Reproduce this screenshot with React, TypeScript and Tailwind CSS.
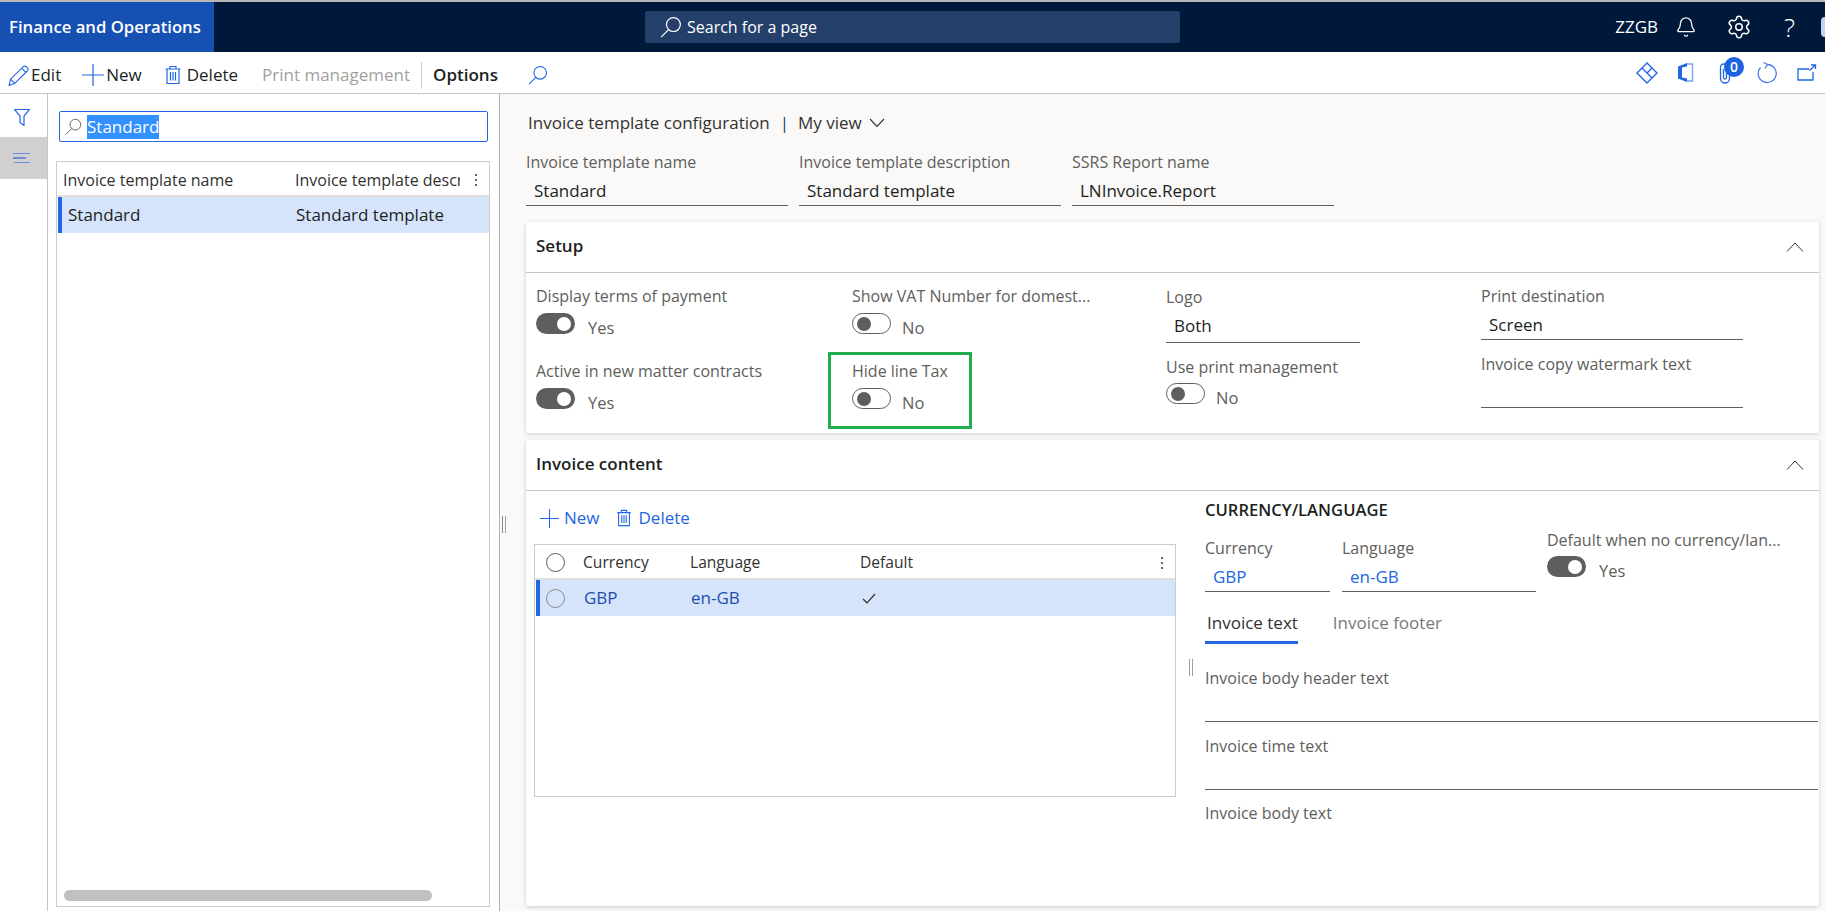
import React from "react";
import { Bell, Settings } from "lucide-react";

const BLUE = "#2266e3";

const Icon = ({ size = 20, color = BLUE, children }: { size?: number; color?: string; children: React.ReactNode }) => (
  <svg width={size} height={size} viewBox="0 0 20 20" fill="none" stroke={color} strokeWidth={1.1} className="shrink-0">
    {children}
  </svg>
);

const PlusIcon = ({ size = 22 }: { size?: number }) => (
  <Icon size={size}>
    <path d="M0 10H20M10 0V20" />
  </Icon>
);

const TrashIcon = ({ size = 20 }: { size?: number }) => (
  <Icon size={size}>
    <path d="M2.5 4H17.5M7 4V1.5H13V4M4 4V18.5H16V4M7.5 7V15.5M10 7V15.5M12.5 7V15.5" strokeWidth={1.2} />
  </Icon>
);

const SearchIcon = ({ size = 20, color = BLUE }: { size?: number; color?: string }) => (
  <Icon size={size} color={color}>
    <circle cx="12.2" cy="7.8" r="6.3" />
    <path d="M7.8 12.4L1 19.2" />
  </Icon>
);

const Kebab = () => (
  <svg width="4" height="14" viewBox="0 0 4 14" fill="#323130" className="shrink-0">
    <circle cx="2" cy="2" r="1" />
    <circle cx="2" cy="7" r="1" />
    <circle cx="2" cy="12" r="1" />
  </svg>
);

const Toggle = ({ on, label }: { on: boolean; label: string }) => (
  <div className="flex items-start">
    {on ? (
      <div className="flex h-[21px] w-[39px] items-center justify-end rounded-full bg-[#605e5c] pr-[4px]">
        <div className="h-[14px] w-[14px] rounded-full bg-white" />
      </div>
    ) : (
      <div className="flex h-[21px] w-[39px] items-center rounded-full border border-[#605e5c] bg-white pl-[4px]">
        <div className="h-[14px] w-[14px] rounded-full bg-[#605e5c]" />
      </div>
    )}
    <span className={`mt-[5px] text-[16.5px] leading-[20px] text-[#605e5c] ${on ? "ml-[13px]" : "ml-[11px]"}`}>{label}</span>
  </div>
);

const Label = ({ children, className = "" }: { children: React.ReactNode; className?: string }) => (
  <div className={`h-[20px] truncate text-[16px] leading-[20px] text-[#605e5c] ${className}`}>{children}</div>
);

const Value = ({
  children,
  className = "",
}: {
  children?: React.ReactNode;
  className?: string;
}) => (
  <div className={`flex h-[34px] items-end border-b border-[#605e5c] pb-[4px] pl-[8px] leading-[20px] text-[#201f1e] ${className}`}>
    {children}
  </div>
);

const ToolbarButton = ({ icon, text, className = "" }: { icon: React.ReactNode; text: string; className?: string }) => (
  <div className={`flex items-center ${className}`}>
    {icon}
    <span>{text}</span>
  </div>
);

const Card = ({ title, className = "", children }: { title: string; className?: string; children: React.ReactNode }) => (
  <section className={`flex flex-col rounded-[2px] bg-white shadow-[0_1px_4px_rgba(0,0,0,0.18)] ${className}`}>
    <div className="flex h-[51px] shrink-0 items-center justify-between border-b border-[#c8c6c4] pr-[15px] pl-[10px]">
      <span className="pb-[2px] font-semibold text-[#201f1e]">{title}</span>
      <svg width="18" height="10" viewBox="0 0 18 10" fill="none" stroke="#323130" strokeWidth="1">
        <path d="M1 9.5L9 1L17 9.5" />
      </svg>
    </div>
    {children}
  </section>
);

export default function App() {
  return (
    <div className="flex h-screen flex-col overflow-hidden bg-[#faf9f8] font-['Open_Sans','Noto_Sans',sans-serif] text-[17px] text-[#201f1e]">
      <div className="h-[2px] shrink-0 bg-[#b8b8b8]" />
      <header className="flex h-[50px] shrink-0 items-center bg-[#00183a] text-white">
        <div className="flex h-full w-[214px] items-center bg-[#1650b2] pl-[9px] text-[16.7px] font-semibold whitespace-nowrap">Finance and Operations</div>
        <div className="ml-[431px] flex h-[32px] w-[535px] items-center rounded-[2px] bg-[#24406a] pl-[15px]">
          <SearchIcon size={22} color="#ffffff" />
          <span className="ml-[5px] text-[16px]">Search for a page</span>
        </div>
        <span className="ml-auto">ZZGB</span>
        <Bell size={22} strokeWidth={1.4} className="ml-[17px]" />
        <Settings size={26} strokeWidth={1.4} className="ml-[29px]" />
        <span className="ml-[32px] text-[26px] leading-none font-light">?</span>
        <div className="ml-[26px] h-[20px] w-[4px] rounded-l-full bg-[#c3d4f2]" />
      </header>
      <div className="flex h-[42px] shrink-0 items-center border-b border-[#c8c6c4] bg-white pl-[8px]">
        <div className="flex items-center pt-[5px]">
          <ToolbarButton
            text="Edit"
            icon={
              <span className="mr-[2px] flex">
                <Icon size={21}>
                  <path d="M1 19.5L2.5 13.5L14.5 1.5Q16 0.5 18 2T18.5 5.5L6.5 17.5ZM2.5 13.5L6.5 17.5M13 3L17 7" />
                </Icon>
              </span>
            }
          />
          <ToolbarButton text="New" className="ml-[21px]" icon={<span className="mr-[2px] flex"><PlusIcon /></span>} />
          <ToolbarButton text="Delete" className="ml-[21px]" icon={<span className="mr-[4px] flex"><TrashIcon /></span>} />
          <span className="ml-[24px] text-[#a19f9d]">Print management</span>
          <div className="mx-[11px] h-[27px] w-px bg-[#d2d0ce]" />
          <span className="font-semibold">Options</span>
          <span className="ml-[30px] flex"><SearchIcon /></span>
        </div>
        <div className="ml-auto flex items-center pr-[8px]">
          <svg width="22" height="22" viewBox="0 0 22 22" fill="none" stroke={BLUE} strokeWidth="1.4">
            <path d="M11 1L21 11L11 21L1 11ZM6 6L16 16M11 11L16 6" />
          </svg>
          <svg width="17" height="21" viewBox="0 0 17 21" className="ml-[19px]">
            <path d="M10 1L1 4.5V16.5L10 20V16.5L5 15.5V5.5L10 4.5Z" fill={BLUE} />
            <path d="M10 2H15.5V19H10" fill="none" stroke="#7aa5ef" strokeWidth="1.4" />
          </svg>
          <div className="relative ml-[25px] flex">
            <svg width="12" height="22" viewBox="0 0 12 22" fill="none" stroke={BLUE} strokeWidth="1.3">
              <path d="M10.5 5V16.5A4.5 4.5 0 0 1 1.5 16.5V5A3 3 0 0 1 7.5 5V15.5A1.5 1.5 0 0 1 4.5 15.5V7" />
            </svg>
            <span className="absolute -top-[5px] left-[5px] flex h-[20px] w-[20px] items-center justify-center rounded-full bg-[#1d62e0] text-[14px] font-semibold text-white">0</span>
          </div>
          <svg width="22" height="22" viewBox="0 0 22 22" fill="none" stroke="#4a7ae8" strokeWidth="1.3" className="ml-[25px]">
            <path d="M11.5 2.5A9 9 0 1 1 4.5 5.5M7.5 0.5L11.5 2.5L9 6.5" />
          </svg>
          <svg width="20" height="18" viewBox="0 0 20 18" fill="none" stroke={BLUE} strokeWidth="1.3" className="ml-[19px]">
            <path d="M16 8V16H1V5H12M12.5 6.5L18.5 1M14 1H18.5V5" />
          </svg>
        </div>
      </div>
      <div className="flex min-h-0 flex-1">
        <aside className="flex w-[48px] shrink-0 flex-col border-r border-[#c8c6c4] bg-white">
          <div className="flex h-[43px] items-center justify-center pt-[3px] pr-[4px]">
            <svg width="16" height="17" viewBox="0 0 16 17" fill="none" stroke={BLUE} strokeWidth="1.2">
              <path d="M0.5 0.5H15.5L10 7V16.5L6 13.5V7Z" />
            </svg>
          </div>
          <div className="flex h-[42px] flex-col items-center justify-center gap-[3px] bg-[#d2d0ce] pr-[4px]">
            <div className="h-[1.5px] w-[17px] bg-[#6a8fe0]" />
            <div className="ml-[-4px] h-[1.5px] w-[13px] bg-[#6a8fe0]" />
            <div className="ml-[1px] h-[1.5px] w-[16px] bg-[#6a8fe0]" />
          </div>
        </aside>
        <aside className="flex w-[452px] shrink-0 flex-col border-r border-[#b3b0ad] bg-white pr-[9px] pb-[4px] pl-[8px]">
          <div className="mt-[17px] ml-[3px] flex h-[31px] w-[429px] shrink-0 items-center rounded-[2px] border border-[#2266e3] pl-[5px]">
            <SearchIcon size={17} color="#605e5c" />
            <span className="ml-[5px] h-[24px] bg-[#3390ff] leading-[24px] text-white">Standard</span>
          </div>
          <div className="mt-[19px] flex min-h-0 flex-1 flex-col border border-[#cccccc]">
            <div className="flex h-[35px] shrink-0 items-center border-b-2 border-[#e1dfdd] pt-[2px] text-[16px] text-[#323130]">
              <span className="ml-[6px] w-[232px] shrink-0">Invoice template name</span>
              <span className="w-[165px] shrink-0 overflow-hidden whitespace-nowrap">Invoice template description</span>
              <span className="ml-[14px]"><Kebab /></span>
            </div>
            <div className="ml-[1px] flex h-[36px] shrink-0 items-center bg-[#d6e4fb]">
              <div className="h-full w-[4px] bg-[#2266e3]" />
              <span className="ml-[6px] w-[228px] shrink-0">Standard</span>
              <span>Standard template</span>
            </div>
            <div className="flex-1" />
            <div className="mb-[5px] ml-[7px] h-[11px] w-[368px] shrink-0 rounded-full bg-[#c0c0c0]" />
          </div>
        </aside>
        <div className="flex w-[26px] shrink-0 pt-[422px] pl-[2px]">
          <div className="flex h-[17px] gap-[2px]">
            <div className="h-full w-px bg-[#a67c6d]" />
            <div className="h-full w-px bg-[#7aa7d9]" />
          </div>
        </div>
        <main className="flex min-w-0 flex-1 flex-col pr-[6px] pb-[5px]">
          <div className="mt-[17px] flex h-[24px] items-center leading-[24px] text-[#323130]">
            <span className="ml-[2px]">Invoice template configuration</span>
            <span className="mr-[9px] ml-[10px] text-[#1a3f7a]">|</span>
            <span>My view</span>
            <svg width="16" height="10" viewBox="0 0 16 10" fill="none" stroke="#323130" strokeWidth="1.1" className="ml-[7px]">
              <path d="M1 1L8 8.5L15 1" />
            </svg>
          </div>
          <div className="mt-[17px] flex gap-[11px]">
            {[
              ["Invoice template name", "Standard"],
              ["Invoice template description", "Standard template"],
              ["SSRS Report name", "LNInvoice.Report"],
            ].map(([label, value]) => (
              <div key={label} className="w-[262px]">
                <Label>{label}</Label>
                <Value>{value}</Value>
              </div>
            ))}
          </div>
          <Card title="Setup" className="mt-[16px] h-[211px] shrink-0">
            <div className="flex pl-[10px]">
              <div className="w-[316px] pt-[13px]">
                <Label>Display terms of payment</Label>
                <div className="mt-[7px]"><Toggle on label="Yes" /></div>
                <Label className="mt-[23px]">Active in new matter contracts</Label>
                <div className="mt-[7px]"><Toggle on label="Yes" /></div>
              </div>
              <div className="w-[314px] pt-[13px]">
                <Label className="w-[245px]">Show VAT Number for domest...</Label>
                <div className="mt-[7px]"><Toggle on={false} label="No" /></div>
                <div className="mt-[14px] ml-[-24px] h-[77px] w-[144px] border-[3px] border-[#22ad4e] pt-[6px] pl-[21px]">
                  <Label>Hide line Tax</Label>
                  <div className="mt-[7px]"><Toggle on={false} label="No" /></div>
                </div>
              </div>
              <div className="w-[315px] pt-[14px]">
                <Label>Logo</Label>
                <Value className="h-[36px] w-[194px] pb-[6px]">Both</Value>
                <Label className="mt-[14px]">Use print management</Label>
                <div className="mt-[6px]"><Toggle on={false} label="No" /></div>
              </div>
              <div className="w-[262px] pt-[13px]">
                <Label>Print destination</Label>
                <Value>Screen</Value>
                <Label className="mt-[14px]">Invoice copy watermark text</Label>
                <Value />
              </div>
            </div>
          </Card>
          <Card title="Invoice content" className="mt-[7px] min-h-0 flex-1">
            <div className="flex">
              <div className="w-[650px] shrink-0 pl-[8px]">
                <div className="mt-[15px] ml-[6px] flex h-[24px] items-center text-[#2266e3]">
                  <ToolbarButton text="New" icon={<span className="mr-[5px] flex"><PlusIcon size={19} /></span>} />
                  <ToolbarButton text="Delete" className="ml-[15px]" icon={<span className="mr-[6px] flex"><TrashIcon size={18} /></span>} />
                </div>
                <div className="mt-[14px] h-[253px] border border-[#cccccc]">
                  <div className="flex h-[35px] items-center border-b-2 border-[#e1dfdd] pt-[2px] text-[15.6px] text-[#323130]">
                    <div className="w-[48px] shrink-0 pl-[11px]">
                      <div className="h-[19px] w-[19px] rounded-full border border-[#605e5c] bg-white" />
                    </div>
                    <span className="w-[107px] shrink-0">Currency</span>
                    <span className="w-[170px] shrink-0">Language</span>
                    <span>Default</span>
                    <span className="mr-[11px] ml-auto"><Kebab /></span>
                  </div>
                  <div className="ml-[1px] flex h-[36px] items-center bg-[#d6e4fb] text-[#1d4fb0]">
                    <div className="h-full w-[4px] bg-[#2266e3]" />
                    <div className="w-[44px] shrink-0 pl-[6px]">
                      <div className="h-[19px] w-[19px] rounded-full border border-[#8a8886]" />
                    </div>
                    <span className="w-[107px] shrink-0">GBP</span>
                    <span className="w-[171px] shrink-0">en-GB</span>
                    <svg width="14" height="11" viewBox="0 0 14 11" fill="none" stroke="#323130" strokeWidth="1.2">
                      <path d="M1 6L5 10L13 1" />
                    </svg>
                  </div>
                </div>
              </div>
              <div className="flex w-[29px] shrink-0 justify-center pt-[168px]">
                <div className="flex h-[17px] gap-[2px]">
                  <div className="h-full w-px bg-[#a19f9d]" />
                  <div className="h-full w-px bg-[#a19f9d]" />
                </div>
              </div>
              <div className="min-w-0 flex-1 pr-[1px]">
                <div className="mt-[9px] h-[20px] text-[16.6px] leading-[20px] font-semibold text-[#201f1e]">CURRENCY/LANGUAGE</div>
                <div className="mt-[10px] flex">
                  <div className="mt-[8px] w-[125px] shrink-0">
                    <Label>Currency</Label>
                    <Value className="text-[#2266e3]">GBP</Value>
                  </div>
                  <div className="mt-[8px] ml-[12px] w-[194px] shrink-0">
                    <Label>Language</Label>
                    <Value className="text-[#2266e3]">en-GB</Value>
                  </div>
                  <div className="ml-[11px] w-[240px] shrink-0">
                    <Label>Default when no currency/lan...</Label>
                    <div className="mt-[6px]"><Toggle on label="Yes" /></div>
                  </div>
                </div>
                <div className="mt-[21px] flex">
                  <span className="border-b-[3px] border-[#2266e3] pl-[2px] pb-[8px] leading-[20px] text-[#323130]">Invoice text</span>
                  <span className="ml-[35px] leading-[20px] text-[#797775]">Invoice footer</span>
                </div>
                <Label className="mt-[24px]">Invoice body header text</Label>
                <Value />
                <Label className="mt-[14px]">Invoice time text</Label>
                <Value />
                <Label className="mt-[13px]">Invoice body text</Label>
              </div>
            </div>
          </Card>
        </main>
      </div>
    </div>
  );
}
